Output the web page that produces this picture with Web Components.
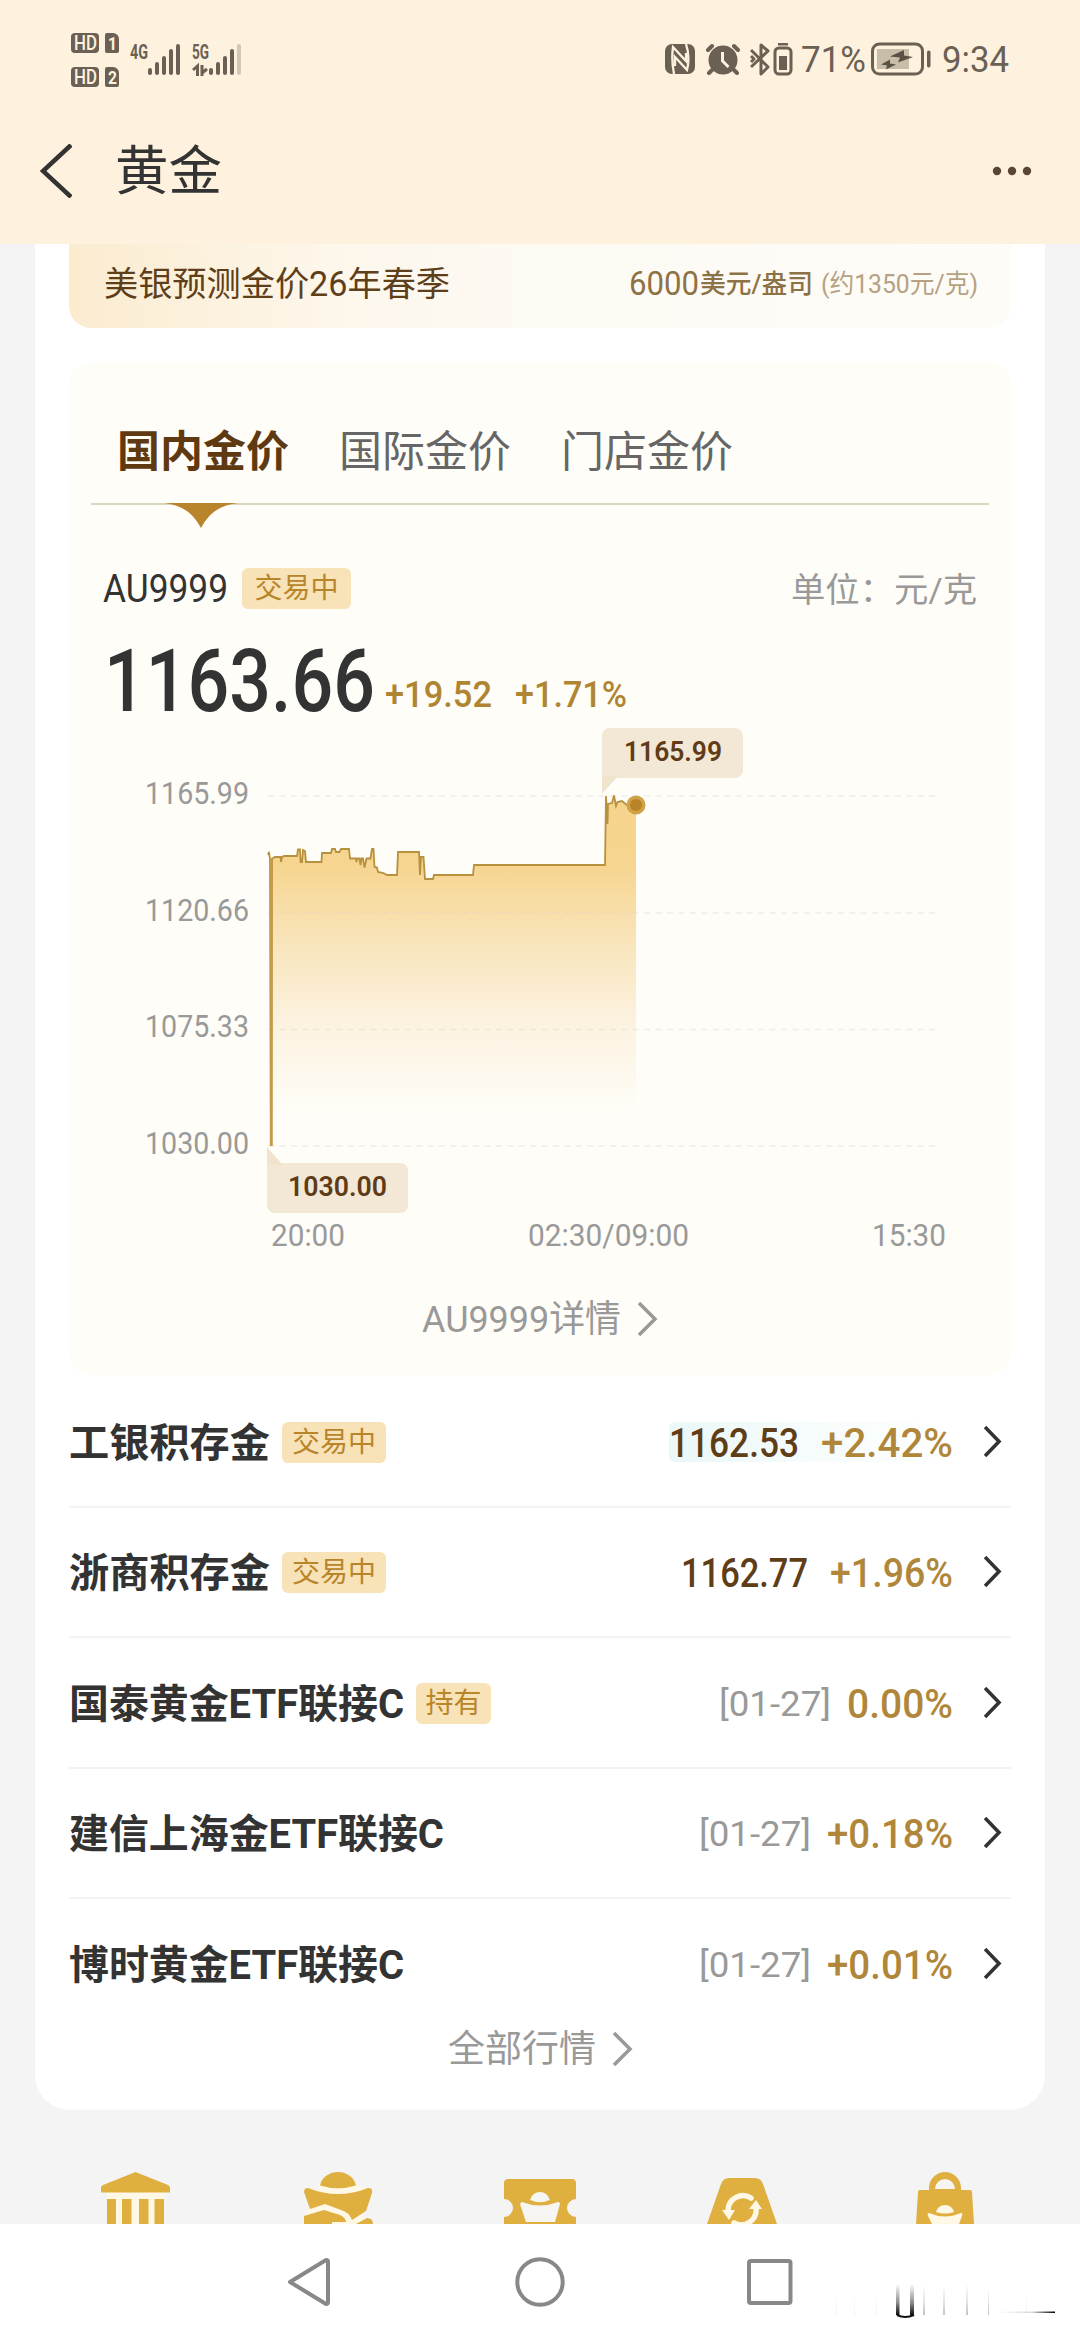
<!DOCTYPE html>
<html lang="zh-CN">
<head>
<meta charset="utf-8">
<title>黄金</title>
<style>
    * {
        box-sizing: border-box;
    }
    body {
        margin: 0;
        width: 1080px;
        height: 2340px;
        overflow: hidden;
        display: flex;
        flex-direction: column;
        background: #f4f4f4;
        color: #333;
        font-family: Roboto, "Noto Sans CJK SC", sans-serif;
    }
    main {
        flex: none;
        height: 1866px;
        margin: 0 35px;
        padding: 0 34px;
        background: #fff;
        border-radius: 0 0 35px 35px;
    }
    price-panel {
        margin-bottom: 2px;
    }
    more-link.all {
        margin-top: 1px;
    }
</style>
</head>
<body>
    <status-bar></status-bar>
    <title-bar label="黄金"></title-bar>
    <main>
        <forecast-banner></forecast-banner>
        <price-panel></price-panel>
        <quote-row name="工银积存金" name-w="201" tag="交易中" tag-w="104" price="1162.53" price-w="130" rate="+2.42%" rate-w="132" gap="22" hot></quote-row>
        <quote-row name="浙商积存金" name-w="201" tag="交易中" tag-w="104" price="1162.77" price-w="127" rate="+1.96%" rate-w="123" gap="22"></quote-row>
        <quote-row name="国泰黄金ETF联接C" name-w="335" tag="持有" tag-w="75" date="[01-27]" rate="0.00%" rate-w="106" gap="16"></quote-row>
        <quote-row name="建信上海金ETF联接C" name-w="375" date="[01-27]" rate="+0.18%" rate-w="126" gap="16"></quote-row>
        <quote-row name="博时黄金ETF联接C" name-w="335" date="[01-27]" rate="+0.01%" rate-w="126" gap="16" last></quote-row>
        <more-link class="all" label="全部行情" w="148" size="37"></more-link>
    </main>
    <service-icons></service-icons>
    <nav-bar></nav-bar>

<script>
// one line of text squeezed to a given width, its box is the cap height
class FitText extends HTMLElement {
    constructor() {
        super()
        this.shadowDOM = this.attachShadow({mode: "open"})
    }

    connectedCallback() {
        const w = this.getAttribute("w")
        const size = this.getAttribute("size")
        const weight = this.getAttribute("weight") || 400
        const squeeze = this.getAttribute("squeeze") || 1
        const h = Math.round(size * 0.715)
        this.shadowDOM.innerHTML = `
            <style>
            :host {
                display: block;
                flex: none;
                width: ${w}px;
                height: ${h}px;
            }
            svg {
                display: block;
                overflow: visible;
            }
            text {
                font-size: ${size}px;
                font-weight: ${weight};
                fill: currentColor;
            }
            </style>
            <svg width="${w}" height="${h}"><text x="0" y="${h}" transform="scale(${squeeze} 1)" textLength="${w / squeeze}" lengthAdjust="spacingAndGlyphs">${this.getAttribute("value")}</text></svg>
        `
    }
}

class ChevronIcon extends HTMLElement {
    constructor() {
        super()
        this.shadowDOM = this.attachShadow({mode: "open"})
    }

    connectedCallback() {
        const w = this.getAttribute("w")
        const h = this.getAttribute("h")
        const s = this.getAttribute("stroke")
        const d = this.hasAttribute("left")
            ? `M${w - 1} 1L3 ${h / 2}L${w - 1} ${h - 1}`
            : `M1 1L${w - 3} ${h / 2}L1 ${h - 1}`
        this.shadowDOM.innerHTML = `
            <style>
            :host {
                display: block;
                flex: none;
            }
            svg {
                display: block;
            }
            </style>
            <svg width="${w}" height="${h}" fill="none" stroke="currentColor" stroke-width="${s}"><path d="${d}"/></svg>
        `
    }
}

class StateTag extends HTMLElement {
    constructor() {
        super()
        this.shadowDOM = this.attachShadow({mode: "open"})
        this.shadowDOM.innerHTML = `
            <style>
            :host {
                display: flex;
                flex: none;
                align-items: center;
                justify-content: center;
                height: 40px;
                padding-top: 1px;
                border-radius: 6px;
                background: #f8e2b7;
                color: #b9852a;
                font-size: 28px;
                line-height: 40px;
            }
            </style>
            <slot></slot>
        `
    }
}

class StatusBar extends HTMLElement {
    constructor() {
        super()
        this.shadowDOM = this.attachShadow({mode: "open"})
    }

    connectedCallback() {
        this.shadowDOM.innerHTML = `
            <style>
            :host {
                display: flex;
                flex: none;
                align-items: flex-start;
                justify-content: space-between;
                height: 104px;
                padding: 33px 71px 0 71px;
                background: #fef1de;
                color: #6a6054;
            }
            svg {
                display: block;
                flex: none;
            }
            .left, .right {
                display: flex;
            }
            .sims {
                display: grid;
                grid-template-columns: 28px 14px;
                gap: 14px 6px;
            }
            .hd, .sim {
                height: 20px;
                background: #6a6054;
                color: #fef1de;
                border-radius: 4px;
                display: flex;
                align-items: center;
                justify-content: center;
            }
            .sim {
                border-radius: 2px 6px 2px 2px;
            }
            .net {
                margin: 12px 0 0 11px;
            }
            .net5 {
                margin: 12px 0 0 11px;
            }
            .right {
                margin-top: 10px;
                height: 32px;
                align-items: center;
            }
            </style>
            <div class="left">
                <div class="sims">
                    <div class="hd"><fit-text w="23" size="20" weight="500" value="HD"></fit-text></div>
                    <div class="sim"><fit-text w="9" size="19" weight="700" value="1"></fit-text></div>
                    <div class="hd"><fit-text w="23" size="20" weight="500" value="HD"></fit-text></div>
                    <div class="sim"><fit-text w="9" size="19" weight="700" value="2"></fit-text></div>
                </div>
                <div class="net"><fit-text w="18" size="20" weight="700" value="4G"></fit-text></div>
                <svg width="33" height="32" viewBox="0 0 33 32" style="margin-top:11px" stroke="currentColor" stroke-width="4" stroke-linecap="round">
                    <path d="M2 26v3M9 20v9M16 14v15M23 7v22M30 2v27"/>
                </svg>
                <div class="net5">
                    <fit-text w="17" size="20" weight="700" value="5G"></fit-text>
                    <svg width="17" height="17" viewBox="0 0 17 17" fill="none" stroke="currentColor" stroke-width="3">
                        <path d="M5.500 17V7L1 11M10 6v11M10 14l5-4"/>
                    </svg>
                </div>
                <svg width="34" height="32" viewBox="0 0 34 32" style="margin-top:11px" stroke="currentColor" stroke-width="4" stroke-linecap="round">
                    <path d="M2 26v3M9 20v9M16 14v15M23 7v22"/>
                    <path d="M30 2v27" stroke="#d3c8b7"/>
                </svg>
            </div>
            <div class="right">
                <svg width="30" height="30" viewBox="0 0 30 30">
                    <rect width="30" height="30" rx="7" fill="currentColor"/>
                    <path d="M9 30C7 20 7 10 8 3L21 17V9M21 0c3 9 3 18 1 26L10 13v9" fill="none" stroke="#fef1de" stroke-width="2.300"/>
                </svg>
                <svg width="34" height="32" viewBox="0 0 34 32" style="margin-left:11px">
                    <circle cx="17" cy="17" r="14.500" fill="currentColor"/>
                    <path d="M2 7l4-4M32 7l-4-4M6 27l-3 3M28 27l3 3" stroke="currentColor" stroke-width="4" stroke-linecap="round"/>
                    <path d="M16.500 9v9l6 6" fill="none" stroke="#fef1de" stroke-width="3"/>
                </svg>
                <svg width="20" height="34" viewBox="0 0 20 34" style="margin-left:10px" fill="none" stroke="currentColor" stroke-width="3">
                    <path d="M1 8l17 17-7 7V3l7 6L1 25M1 14l3 3-3 3" stroke-linejoin="round"/>
                </svg>
                <svg width="20" height="34" viewBox="0 0 20 34" style="margin-left:3px">
                    <rect x="2" y="6" width="16" height="26" rx="4" fill="none" stroke="currentColor" stroke-width="3"/>
                    <path d="M5 1h10v2.500H5zM6 14h8v14H6z" fill="currentColor"/>
                </svg>
                <fit-text style="margin-left:8px" w="65" size="36" value="71%"></fit-text>
                <svg width="60" height="34" viewBox="0 0 60 34" style="margin-left:5px">
                    <rect x="1.500" y="2" width="50" height="30" rx="7" fill="none" stroke="currentColor" stroke-width="3"/>
                    <path d="M6 7h32v20H6z" fill="#c8bda7"/>
                    <path d="M33 8L19 14.500l10 1-2 5 15-5.500-9-1.500zM19 17.500l-9 5 6 1-1 4 10-5-6-1z" fill="#5a5145"/>
                    <rect x="56" y="8.500" width="3.500" height="17" rx="1.700" fill="currentColor"/>
                </svg>
                <fit-text style="margin-left:11px" w="67" size="36" value="9:34"></fit-text>
            </div>
        `
    }
}

class TitleBar extends HTMLElement {
    constructor() {
        super()
        this.shadowDOM = this.attachShadow({mode: "open"})
    }

    connectedCallback() {
        this.shadowDOM.innerHTML = `
            <style>
            :host {
                display: flex;
                flex: none;
                align-items: center;
                height: 140px;
                padding: 0 48px 6px 40px;
                background: #fef1de;
                color: #333;
            }
            fit-text {
                margin: 0 auto 1px 43px;
            }
            svg {
                display: block;
            }
            </style>
            <chevron-icon left w="32" h="54" stroke="4.500"></chevron-icon>
            <fit-text w="107" size="53.500" value="${this.getAttribute("label")}"></fit-text>
            <svg width="40" height="10" fill="#5a4635"><circle cx="5" cy="5" r="4.200"/><circle cx="20" cy="5" r="4.200"/><circle cx="35" cy="5" r="4.200"/></svg>
        `
    }
}

class ForecastBanner extends HTMLElement {
    constructor() {
        super()
        this.shadowDOM = this.attachShadow({mode: "open"})
    }

    connectedCallback() {
        this.shadowDOM.innerHTML = `
            <style>
            :host {
                display: flex;
                align-items: center;
                height: 84px;
                padding: 0 33px 6px 35px;
                border-radius: 0 0 22px 22px;
                background: linear-gradient(90deg, #fbecd0, #fdf7ec 30%, #fdfaf4 50%, #fefcf7);
                color: #5f3f19;
            }
            .price {
                margin-left: auto;
                color: #8d7245;
            }
            .unit {
                margin-left: 1px;
                color: #8d7245;
            }
            .about {
                margin-left: 8px;
                color: #b5a283;
            }
            </style>
            <fit-text w="346" size="34.500" value="美银预测金价26年春季"></fit-text>
            <fit-text class="price" w="70" size="34" value="6000"></fit-text>
            <fit-text class="unit" w="113" size="26" weight="500" value="美元/盎司"></fit-text>
            <fit-text class="about" w="157" size="26" value="(约1350元/克)"></fit-text>
        `
    }
}

class PricePanel extends HTMLElement {
    constructor() {
        super()
        this.shadowDOM = this.attachShadow({mode: "open"})
    }

    connectedCallback() {
        this.shadowDOM.innerHTML = `
            <style>
            * {
                box-sizing: border-box;
            }
            :host {
                display: block;
                height: 1013px;
                margin-top: 34px;
                border-radius: 22px;
                background: #fefdf7;
                overflow: hidden;
            }
            .tabs {
                display: flex;
                gap: 50px;
                height: 143px;
                margin: 0 22px;
                padding: 74px 0 0 26px;
                border-bottom: 2px solid #dbd5bf;
                color: #666;
            }
            .tab.on {
                color: #5f3a10;
            }
            .tab {
                position: relative;
            }
            .tab svg {
                position: absolute;
                left: 47px;
                top: 67px;
            }
            .head {
                display: flex;
                align-items: center;
                height: 41px;
                margin: 63px 34px 0 34px;
            }
            .head state-tag {
                width: 109px;
                height: 41px;
                margin: 0 auto 0 14px;
            }
            .head .unit {
                margin-top: 3px;
                color: #999;
            }
            .price {
                display: flex;
                align-items: flex-end;
                height: 63px;
                margin: 39px 0 0 35px;
                color: #333;
            }
            .price .diff {
                margin: 0 0 4px 10px;
                color: #b08532;
            }
            .price .rate {
                margin: 0 0 4px 23px;
                color: #b08532;
            }
            more-link {
                margin-top: 55px;
            }
            </style>
            <div class="tabs">
                <div class="tab on">
                    <fit-text w="172" size="43" weight="700" value="国内金价"></fit-text>
                    <svg width="74" height="26"><path d="M0 0H74C56 2 45 10 37 25C29 10 18 2 0 0Z" fill="#b9852c"/></svg>
                </div>
                <div class="tab"><fit-text w="172" size="43" value="国际金价"></fit-text></div>
                <div class="tab"><fit-text w="172" size="43" value="门店金价"></fit-text></div>
            </div>
            <div class="head">
                <fit-text w="125" size="38" value="AU9999"></fit-text>
                <state-tag>交易中</state-tag>
                <fit-text class="unit" w="186" size="34" value="单位：元/克"></fit-text>
            </div>
            <div class="price">
                <fit-text w="271" size="88" weight="500" squeeze="0.850" value="1163.66"></fit-text>
                <fit-text class="diff" w="107" size="37" weight="500" squeeze="0.920" value="+19.52"></fit-text>
                <fit-text class="rate" w="112" size="37" weight="500" value="+1.71%"></fit-text>
            </div>
            <price-chart></price-chart>
            <more-link label="AU9999详情" w="199" size="37"></more-link>
        `
    }
}

class PriceChart extends HTMLElement {
    constructor() {
        super()
        this.shadowDOM = this.attachShadow({mode: "open"})
    }

    connectedCallback() {
        const line = "0,59 1,56 2,63 3,350 4,63 7,61 12.500,61 13,66 14,61 16,60 29,60 30,53.500 32,53.500 32.500,66 34,66 35,54 37,55 38,66 53.500,66 54,57 63,57 64,53 67,53 68,56 71.500,56 73,53 81,53 82,62.500 88,62.500 88.500,66 89,62.500 91.500,62.500 92.500,69 93.500,62.500 95,62.500 96.500,71.500 98.500,62.500 102.500,62.500 104,53 105.500,53 106.500,71 109,71.500 110,76 115.500,77 119,79 129,79 130,56 151,56 152,79 153,61 155.500,61 157,83 165,83 166,79 205,79 206,69 337,69 338,0 339.500,28 340,8 344,7 346,-0.500 348,10 349.500,6 354,5 360,10 368,9"
        this.shadowDOM.innerHTML = `
            <style>
            * {
                box-sizing: border-box;
            }
            :host {
                display: block;
                margin-top: 85px;
            }
            .plot {
                display: flex;
                position: relative;
                height: 350px;
            }
            .ylabels {
                display: flex;
                flex-direction: column;
                justify-content: space-between;
                align-items: flex-end;
                width: 180px;
                margin: -15px 19px -8px 0;
                color: #999;
            }
            svg {
                display: block;
                overflow: visible;
            }
            .tip {
                position: absolute;
                display: flex;
                align-items: center;
                justify-content: center;
                height: 50px;
                width: 141px;
                padding-bottom: 4px;
                border-radius: 8px;
                background: #f2e8d5;
                color: #5f3c17;
            }
            .tip::after {
                content: "";
                position: absolute;
                left: 0;
                border: 0 solid transparent;
                border-right-width: 16px;
            }
            .max {
                left: 533px;
                top: -68px;
                border-bottom-left-radius: 0;
            }
            .max::after {
                top: 48px;
                border-top: 18px solid #f0e4cd;
            }
            .min {
                left: 198px;
                top: 367px;
                border-top-left-radius: 0;
            }
            .min::after {
                bottom: 48px;
                border-bottom: 18px solid #f0e4cd;
            }
            .xlabels {
                display: flex;
                justify-content: space-between;
                margin: 77px 65px 0 202px;
                color: #999;
            }
            </style>
            <div class="plot">
                <div class="ylabels">
                    <fit-text w="104" size="31.500" value="1165.99"></fit-text>
                    <fit-text w="104" size="31.500" value="1120.66"></fit-text>
                    <fit-text w="104" size="31.500" value="1075.33"></fit-text>
                    <fit-text w="104" size="31.500" value="1030.00"></fit-text>
                </div>
                <svg width="668" height="350">
                    <defs>
                        <linearGradient id="gold" x1="0" y1="0" x2="0" y2="350" gradientUnits="userSpaceOnUse">
                            <stop offset="0" stop-color="#f6d48c"/>
                            <stop offset=".2" stop-color="#f6d590"/>
                            <stop offset=".42" stop-color="#f9e5bb"/>
                            <stop offset=".65" stop-color="#fcf2e0"/>
                            <stop offset=".9" stop-color="#fefdf7"/>
                        </linearGradient>
                    </defs>
                    <path d="M3 350V62L${line.split("350 ")[1]}V350Z" fill="url(#gold)"/>
                    <path d="M0 0H668M0 117H668M0 233.500H668M0 350H668" stroke="#d9d5c8" stroke-opacity=".38" stroke-width="1.500" stroke-dasharray="6 5.400"/>
                    <polyline points="${line}" fill="none" stroke="#b8913f" stroke-width="1.800"/>
                    <path d="M3.300 62V350" stroke="#c69b48" stroke-width="3"/>
                    <circle cx="368" cy="9" r="9.500" fill="#d0a349"/>
                    <circle cx="368" cy="9" r="6" fill="#b98329"/>
                </svg>
                <div class="tip max"><fit-text w="98" size="28" weight="600" value="1165.99"></fit-text></div>
                <div class="tip min"><fit-text w="99" size="28" weight="600" value="1030.00"></fit-text></div>
            </div>
            <div class="xlabels">
                <fit-text w="74" size="31.500" value="20:00"></fit-text>
                <fit-text w="161" size="31.500" value="02:30/09:00"></fit-text>
                <fit-text w="74" size="31.500" value="15:30"></fit-text>
            </div>
        `
    }
}

class MoreLink extends HTMLElement {
    constructor() {
        super()
        this.shadowDOM = this.attachShadow({mode: "open"})
    }

    connectedCallback() {
        this.shadowDOM.innerHTML = `
            <style>
            :host {
                display: flex;
                align-items: center;
                justify-content: center;
                gap: 17px;
                height: 36px;
                color: #999;
            }
            </style>
            <fit-text w="${this.getAttribute("w")}" size="${this.getAttribute("size")}" value="${this.getAttribute("label")}"></fit-text>
            <chevron-icon w="20" h="34" stroke="3.500"></chevron-icon>
        `
    }
}

class QuoteRow extends HTMLElement {
    constructor() {
        super()
        this.shadowDOM = this.attachShadow({mode: "open"})
    }

    connectedCallback() {
        const get = key => this.getAttribute(key)
        const tag = get("tag") ? `<state-tag style="width:${get("tag-w")}px">${get("tag")}</state-tag>` : ""
        const value = get("price")
            ? `<fit-text class="price" w="${get("price-w")}" size="41" weight="500" value="${get("price")}"></fit-text>`
            : `<fit-text class="date" w="112" size="35" value="${get("date")}"></fit-text>`
        this.shadowDOM.innerHTML = `
            <style>
            :host {
                display: flex;
                align-items: center;
                gap: 12px;
                height: 130.500px;
                padding-top: 2px;
                border-bottom: 2px solid #f3f3f3;
                color: #333;
            }
            :host([last]) {
                border-bottom-color: transparent;
            }
            .value {
                display: flex;
                align-items: center;
                gap: ${get("gap")}px;
                height: 40px;
                margin-left: auto;
                border-radius: 6px;
            }
            :host([hot]) .value {
                background: linear-gradient(90deg, #eaf8f7, #f6fcfb 50%, #fff);
            }
            .price {
                color: #5f3d17;
            }
            .date {
                color: #999;
            }
            .rate {
                color: #b0873a;
            }
            chevron-icon {
                margin: 0 9px 2px 19px;
            }
            </style>
            <fit-text w="${get("name-w")}" size="40" weight="700" value="${get("name")}"></fit-text>
            ${tag}
            <div class="value">
                ${value}
                <fit-text class="rate" w="${get("rate-w")}" size="41" weight="500" value="${get("rate")}"></fit-text>
            </div>
            <chevron-icon w="18" h="31" stroke="3.600"></chevron-icon>
        `
    }
}

class ServiceIcons extends HTMLElement {
    constructor() {
        super()
        this.shadowDOM = this.attachShadow({mode: "open"})
    }

    connectedCallback() {
        this.shadowDOM.innerHTML = `
            <style>
            :host {
                display: grid;
                grid-template-columns: repeat(5, 202.400px);
                justify-content: center;
                justify-items: center;
                align-items: end;
                flex: none;
                height: 114px;
                overflow: hidden;
            }
            svg {
                display: block;
                fill: #dfb040;
            }
            .light {
                fill: #fff8e6;
            }
            .pale {
                fill: #f6f5f1;
            }
            </style>
            <svg width="72" height="54">
                <path class="light" d="M8 20h57v34H8z"/>
                <path d="M36.500 2L69 15Q71 16 71 18V22.500H2V18Q2 16 4 15ZM8 29h9v25H8zM23 29h9.500v25H23zM40 29h9.500v25H40zM55.500 29H65v25h-9.500z"/>
            </svg>
            <svg width="72" height="54">
                <path class="light" d="M18 14Q36 22 54 14L66 20 60 54H4V42L10 36Z"/>
                <path d="M18 15.500C22-2.500 50-2.500 54 15.500Q36 21 18 15.500ZM6 18Q36 30 66 18Q71 18 70 23L64 41 50 50Q47 42 39 40L23 34 8 39 2 22Q2 18 6 18ZM2 46L22 40 38 45Q44 48 44 52H30V54H2ZM54 54L65 48Q71 48 71 54Z"/>
            </svg>
            <svg width="72" height="54">
                <path d="M5 9H68Q72 9 72 13V29A9 9 0 0 0 72 47V54H0V47A9 9 0 0 0 0 29V13Q0 9 5 9Z"/>
                <path class="pale" d="M26 31C28 19 44 19 46 31Q36 34 26 31ZM18 32Q36 39 54 32Q56 32 56 34L51 52H22L16 34Q17 32 18 32Z"/>
                <path d="M26 31Q36 36 46 31" fill="none" stroke="#dfb040" stroke-width="2.500"/>
            </svg>
            <svg width="72" height="54">
                <path d="M23 8H49Q55 8 57 14L71 54H1L15 14Q17 8 23 8Z"/>
                <path d="M45 28A15 15 0 0 0 22 40M28 53A15 15 0 0 0 50 38" fill="none" stroke="#fff8e6" stroke-width="5.500" stroke-linecap="round"/>
                <path class="light" d="M16 40H29L23 50ZM43 39L50 30 56 39Z"/>
            </svg>
            <svg width="72" height="54">
                <path d="M20 20V18A16 16 0 0 1 52 18V20H61Q63 20 63 22L65 54H7L9 22Q9 20 11 20Z"/>
                <path class="pale" d="M26 19A10 10 0 0 1 46 19Z"/>
                <path class="light" d="M27 42Q29 35 36 35Q43 35 45 42Q36 45 27 42ZM20 43Q36 50 52 43Q54 43 53 46L50 54H23L19 46Q18 43 20 43Z"/>
            </svg>
        `
    }
}

class NavBar extends HTMLElement {
    constructor() {
        super()
        this.shadowDOM = this.attachShadow({mode: "open"})
        this.shadowDOM.innerHTML = `
            <style>
            :host {
                display: flex;
                flex: none;
                align-items: flex-start;
                position: relative;
                height: 116px;
                padding: 33px 0 0 287px;
                background: #fff;
            }
            svg {
                display: block;
                flex: none;
                fill: none;
                stroke: #888;
                stroke-width: 4;
            }
            .streaks {
                position: absolute;
                left: 820px;
                top: 54px;
                stroke: none;
            }
            </style>
            <svg width="44" height="50"><path d="M39 3L3 25L39 47Q41 47 41 45V5Q41 3 39 3Z" stroke-linejoin="round"/></svg>
            <svg width="50" height="50" style="margin-left:184px"><circle cx="25" cy="25" r="22.700"/></svg>
            <svg width="46" height="50" style="margin-left:182px"><rect x="2" y="4" width="41.500" height="42" rx="2"/></svg>
            <svg class="streaks" width="240" height="50">
                <defs>
                    <linearGradient id="down" x1="0" y1="0" x2="0" y2="1"><stop offset="0" stop-color="#000" stop-opacity="0"/><stop offset=".6" stop-color="#000" stop-opacity=".45"/><stop offset="1" stop-color="#111"/></linearGradient>
                    <linearGradient id="across"><stop offset="0" stop-color="#000" stop-opacity="0"/><stop offset=".6" stop-color="#000" stop-opacity=".15"/><stop offset="1" stop-color="#000"/></linearGradient>
                </defs>
                <path d="M76 6h3.500v31h-3.500zM90 6h4v31h-4z" fill="url(#down)"/>
                <path d="M77 37Q85 41 94 37" stroke="#111" stroke-width="2"/>
                <path d="M103 8h2v29h-2zM123 6h2v31h-2zM146 6h2v31h-2zM168 12h1v25h-1z" fill="url(#down)" opacity=".25"/>
                <path d="M16 8h1v30h-1zM34 8h1v30h-1zM56 8h1v30h-1zM206 8h1v27h-1z" fill="url(#down)" opacity=".05"/>
                <path d="M178 33.500h57v1.500h-57z" fill="url(#across)"/>
            </svg>
        `
    }
}

customElements.define("fit-text", FitText)
customElements.define("chevron-icon", ChevronIcon)
customElements.define("state-tag", StateTag)
customElements.define("status-bar", StatusBar)
customElements.define("title-bar", TitleBar)
customElements.define("forecast-banner", ForecastBanner)
customElements.define("more-link", MoreLink)
customElements.define("price-chart", PriceChart)
customElements.define("price-panel", PricePanel)
customElements.define("quote-row", QuoteRow)
customElements.define("service-icons", ServiceIcons)
customElements.define("nav-bar", NavBar)
</script>
</body>
</html>
